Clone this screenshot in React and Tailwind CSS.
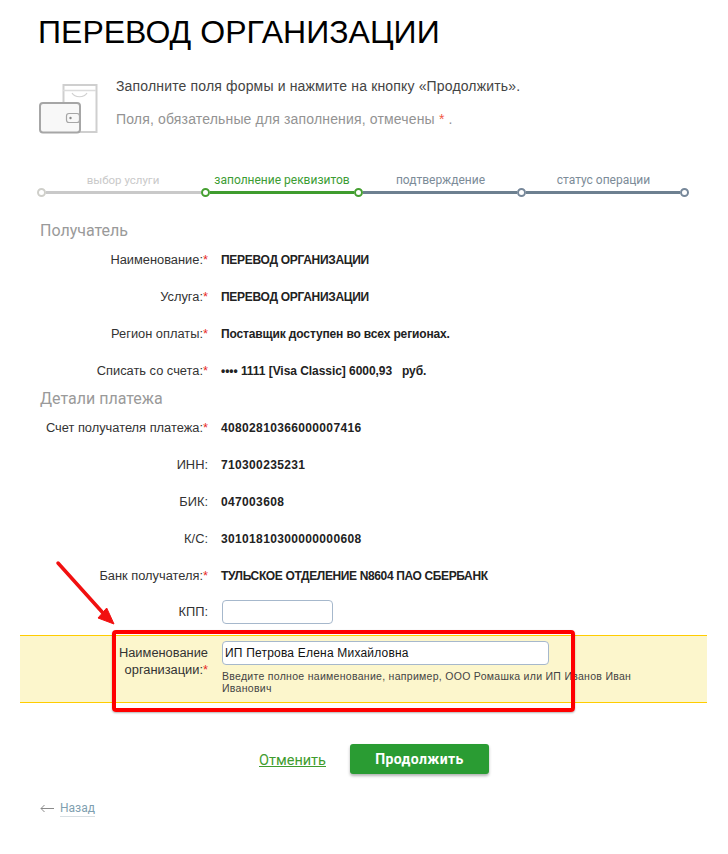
import React from "react";

const Star = () => <span className="text-[#e8281e]">*</span>;

function Row({ label, req, value, track = "", mb = "mb-[21px]" }) {
  return (
    <div className={`flex items-center h-4 ${mb}`}>
      <div className="w-[188px] text-right text-[12.85px] leading-4 text-[#333] font-['Liberation_Sans',sans-serif]">
        {label}
        {req && <Star />}
      </div>
      <div className={`ml-[13px] text-[12px] leading-4 font-bold text-[#222] whitespace-pre font-['Liberation_Sans',sans-serif] ${track}`}>{value}</div>
    </div>
  );
}

function Dot({ color }) {
  return <div className={`w-[9px] h-[9px] shrink-0 rounded-full border-2 bg-white ${color}`} />;
}

export default function App() {
  return (
    <div className="relative w-[728px] h-[854px] bg-white overflow-hidden font-['Liberation_Sans',sans-serif]">
      <div className="pl-[38px] pt-[12px]">
        <h1 className="text-[32px] leading-[40px] font-normal text-black tracking-[0.02px]">ПЕРЕВОД ОРГАНИЗАЦИИ</h1>
      </div>

      <div className="flex pl-[38px] mt-[24px]">
        <svg width="60" height="54" viewBox="0 0 60 54" className="shrink-0 mt-[8px]">
          <rect x="25.5" y="1" width="33" height="47" fill="#fff" stroke="#cfcfcf" strokeWidth="2" />
          <path d="M25 6.5H58" stroke="#dcdcdc" strokeWidth="1.5" />
          <path d="M34 9c3 5 12 5 15 0" fill="none" stroke="#d0d0d0" strokeWidth="1.2" />
          <rect x="2" y="19" width="40" height="29.5" rx="3" fill="#f8f8f8" stroke="#a6a6a6" strokeWidth="2" />
          <rect x="28.5" y="29.5" width="13" height="9" rx="2.5" fill="#f8f8f8" stroke="#a6a6a6" strokeWidth="1.2" />
          <circle cx="32.5" cy="34" r="1.2" fill="#8a8a8a" />
        </svg>
        <div className="ml-[18px] text-[14px] leading-5 tracking-[0.16px]">
          <div className="text-[#444]">Заполните поля формы и нажмите на кнопку «Продолжить».</div>
          <div className="text-[#939393] mt-[13px]">
            Поля, обязательные для заполнения, отмечены <span className="text-[#f15a45]">*</span> .
          </div>
        </div>
      </div>

      <div className="ml-[37px] mt-[35px] font-['Roboto',sans-serif] text-[12px] leading-[14px]">
        <div className="flex w-[648px] text-center">
          <div className="w-[172px] text-[11.5px] text-[#c9c9c9]">выбор услуги</div>
          <div className="w-[146px] text-[#3c9c33]">заполнение реквизитов</div>
          <div className="ml-[4px] w-[163px] text-[#7c8b98]">подтверждение</div>
          <div className="w-[163px] text-[#7c8b98]">статус операции</div>
        </div>
        <div className="flex items-center mt-[1px]">
          <Dot color="border-[#cfcfca]" />
          <div className="w-[155px] h-[3px] bg-[#c9c9c9]" />
          <Dot color="border-[#46a032]" />
          <div className="w-[144px] h-[3px] bg-[#3f9c2e]" />
          <Dot color="border-[#46a032]" />
          <div className="w-[154px] h-[3px] bg-[#6d8090]" />
          <Dot color="border-[#77889a]" />
          <div className="w-[154px] h-[3px] bg-[#6d8090]" />
          <Dot color="border-[#77889a]" />
        </div>
      </div>

      <h2 className="ml-[40px] mt-[24px] text-[16px] leading-5 font-normal text-[#9a9a9a] font-['Roboto',sans-serif]">Получатель</h2>
      <div className="mt-[11px]">
        <div className="pl-[20px]">
          <Row label="Наименование:" req value="ПЕРЕВОД ОРГАНИЗАЦИИ" track="tracking-[-0.3px]" />
          <Row label="Услуга:" req value="ПЕРЕВОД ОРГАНИЗАЦИИ" track="tracking-[-0.3px]" />
          <Row label="Регион оплаты:" req value="Поставщик доступен во всех регионах." track="tracking-[-0.14px]" />
          <Row label="Списать со счета:" req value="•••• 1111 [Visa Classic] 6000,93   руб." track="tracking-[-0.05px]" mb="mb-0" />
        </div>
      </div>

      <h2 className="ml-[40px] mt-[10px] text-[16px] leading-5 font-normal text-[#9a9a9a] font-['Roboto',sans-serif]">Детали платежа</h2>
      <div className="pl-[20px] mt-[11px]">
        <Row label="Счет получателя платежа:" req value="40802810366000007416" track="tracking-[0.35px]" />
        <Row label="ИНН:" value="710300235231" track="tracking-[0.35px]" />
        <Row label="БИК:" value="047003608" track="tracking-[0.35px]" />
        <Row label="К/С:" value="30101810300000000608" track="tracking-[0.35px]" />
        <Row label="Банк получателя:" req value="ТУЛЬСКОЕ ОТДЕЛЕНИЕ N8604 ПАО СБЕРБАНК" track="tracking-[-0.37px]" mb="mb-[16px]" />
        <div className="flex items-center h-6">
          <div className="w-[188px] text-right text-[12.85px] text-[#333]">КПП:</div>
          <input className="ml-[14px] w-[111px] h-6 bg-white border border-[#a6b8cc] rounded-[4px] outline-none" />
        </div>
      </div>

      <div className="ml-[20px] mt-[11px] w-[687px] h-[68px] bg-[#fcf6cc] border-y border-[#ffcc00] flex pt-[5px]">
        <div className="w-[188px] text-right text-[12.85px] leading-[16.5px] pt-[4px] text-[#333]">
          Наименование
          <br />
          организации:
          <Star />
        </div>
        <div className="ml-[14px] w-[420px]">
          <input
            readOnly
            value="ИП Петрова Елена Михайловна"
            className="block w-[327px] h-6 px-[2px] bg-white border border-[#a6b8cc] rounded-[4px] text-[12px] text-[#111] tracking-[0.2px] outline-none font-['Liberation_Sans',sans-serif]"
          />
          <div className="mt-[5px] text-[10.5px] leading-3 text-[#444] tracking-[0.29px]">
            Введите полное наименование, например, ООО Ромашка или ИП Иванов Иван Иванович
          </div>
        </div>
      </div>

      <div className="flex items-center ml-[259px] mt-[41px]">
        <a className="mt-[4px] text-[14.5px] leading-5 text-[#3f9c2e] underline font-['Roboto',sans-serif]">Отменить</a>
        <button className="ml-[24px] w-[139px] h-[30px] rounded-[3px] bg-[#2a9c33] text-white text-[14px] font-bold tracking-[0.4px] shadow-[0_2px_3px_rgba(0,0,0,0.3)] font-['Roboto',sans-serif]">
          Продолжить
        </button>
      </div>

      <div className="flex items-center ml-[40px] mt-[26px] text-[12px] leading-4 font-['Roboto',sans-serif]">
        <svg width="14" height="9" viewBox="0 0 14 9" className="text-[#8a8a8a]">
          <path d="M14 4.5H1M4.5 1L1 4.5 4.5 8" fill="none" stroke="currentColor" strokeWidth="1" />
        </svg>
        <a className="ml-[6px] text-[#7f9fb0] border-b border-[#d8dfe3]">Назад</a>
      </div>

      {/* annotations laid over the page */}
      <div className="absolute left-[112px] top-[630px] w-[463px] h-[82px] border-4 border-[#ff0000] rounded-[4px] shadow-[0_1px_2px_rgba(0,0,0,0.3)]" />
      <svg className="absolute left-[50px] top-[555px]" width="70" height="75" viewBox="0 0 70 75">
        <path d="M8 8L53 58" stroke="#f11010" strokeWidth="3.5" strokeLinecap="round" />
        <path d="M64 69L48 63 56.7 53Z" fill="#f11010" stroke="#f11010" strokeWidth="1" />
      </svg>
    </div>
  );
}
